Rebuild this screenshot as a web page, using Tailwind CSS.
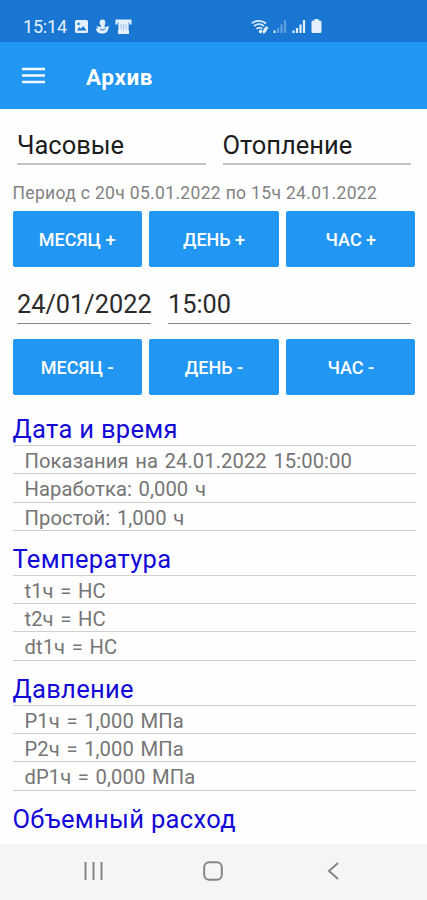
<!DOCTYPE html>
<html lang="ru">
<head>
  <meta charset="UTF-8" />
  <meta name="viewport" content="width=device-width, initial-scale=1" />
  <title>Архив</title>
  <script src="https://cdn.jsdelivr.net/npm/@tailwindcss/browser@4"></script>
</head>
<body class="bg-[#fefefe] font-['Roboto',sans-serif]">
  <div class="flex flex-col h-[900px] w-[427px] overflow-hidden">

    <!-- Строка состояния -->
    <div class="h-[42px] shrink-0 bg-[#1976d2] text-[#e3effa] flex items-start pl-[23px] pt-[17px]">
      <span class="text-[18px] leading-5 w-[45px] tracking-[-0.2px] whitespace-nowrap">15:14</span>
      <svg class="ml-[6px] mt-[2px]" width="15" height="16" viewBox="0 0 15 16">
        <path fill="currentColor" fill-rule="evenodd" d="M2.5 1h10A1.5 1.5 0 0 1 14 2.500v10A1.500 1.500 0 0 1 12.500 14h-10A1.500 1.500 0 0 1 1 12.500v-10A1.500 1.500 0 0 1 2.500 1zM3 11.500h9.500L9.300 7 7 9.800 5.300 8zM4.500 3.500a1.300 1.300 0 1 0 .1 0z" />
      </svg>
      <svg class="ml-[6px] mt-[2px]" width="15" height="16" viewBox="0 0 15 16">
        <g fill="currentColor">
          <circle cx="7.500" cy="3.500" r="2.900" />
          <path d="M5.500 5h4l.3 3.500 3.800-1.800c.2 5-2.100 7.800-6.100 7.800C3.500 14.500 1 12.500 1 9.500l2 .1L1.500 7l4.300 1z" />
        </g>
        <path d="M5 10c1.800 1.500 4 1.200 5.500-.5" fill="none" stroke="#1976d2" stroke-width="1" />
      </svg>
      <svg class="ml-[5px] mt-[1px]" width="17" height="17" viewBox="0 0 17 17">
        <path d="M.5 1.500h16v5h-3V4h-10v2.500h-3z" fill="currentColor" />
        <path d="M3 3h11v13H3z" fill="currentColor" />
        <path d="M3 4.200v8M14 4.200v8" stroke="#1976d2" stroke-width=".8" />
        <path d="M6 6v5M8.500 6v7M11 6v5" stroke="#8fbdea" stroke-width=".8" />
      </svg>
      <svg class="ml-[119px] mt-[1px]" width="19" height="17" viewBox="0 0 19 17">
        <g fill="none" stroke="currentColor" stroke-width="1.700">
          <path d="M.8 5.500C4.500 2 11 2 15 5.500" />
          <path d="M3 8.200C6 5.500 10 5.500 13 8.200" />
          <path d="M5.500 11C7.300 9.200 9.500 9.200 11.200 11" />
        </g>
        <circle cx="9.500" cy="13.500" r="1.800" fill="currentColor" />
        <path d="M13 10.500L15.500 8 18 10.500h-1.500L15 14l-2.500 2-1-2.500z" fill="currentColor" />
      </svg>
      <svg class="ml-[3px] mt-[2px]" width="14" height="15" viewBox="0 0 14 15">
        <path d="M1.500 14v-2.500" stroke="currentColor" stroke-width="2" />
        <path d="M5 14V9M8.500 14V5.500M12 14V1" stroke="#5f9fde" stroke-width="2.200" />
      </svg>
      <svg class="ml-[5px] mt-[2px]" width="14" height="15" viewBox="0 0 14 15">
        <path d="M1.500 14v-2.500M5 14V9M8.500 14V5.500M12 14V1" stroke="currentColor" stroke-width="2.200" />
      </svg>
      <svg class="ml-[5px] mt-[1px]" width="12" height="16" viewBox="0 0 12 16">
        <path d="M3.500 1h4v1.500H9A1.500 1.500 0 0 1 10.500 4v9.500A1.500 1.500 0 0 1 9 15H2A1.500 1.500 0 0 1 .5 13.500V4A1.500 1.500 0 0 1 2 2.500h1.500z" fill="currentColor" />
      </svg>
    </div>

    <!-- Заголовок -->
    <header class="h-[66.5px] shrink-0 bg-[#2196f3] text-white flex items-center pl-[22px]">
      <svg class="mt-[1px]" width="23" height="17" viewBox="0 0 23 17">
        <path d="M0 2h23M0 8.500h23M0 15h23" stroke="#f4faff" stroke-width="2.700" />
      </svg>
      <h1 class="ml-[41px] mt-[3px] text-[22.5px] leading-7 font-bold tracking-[0.6px]">Архив</h1>
    </header>

    <main class="grow min-h-0 overflow-hidden pl-[12.5px] pr-[11.5px]">
      <div class="flex gap-[17px] pl-[4.500px] pr-[4.500px] pt-[19.500px] text-[25.500px] leading-[34px] text-[#1c1c1c]">
        <div class="w-[189px] h-[37px] border-b-2 border-[#c3c3c3]">Часовые</div>
        <div class="w-[189px] h-[37px] border-b-2 border-[#c3c3c3]">Отопление</div>
      </div>

      <p class="mt-[17px] h-[28.500px] text-[17.500px] leading-[22px] tracking-[0.330px] text-[#828282] whitespace-nowrap">Период с 20ч 05.01.2022 по 15ч 24.01.2022</p>

      <div class="grid grid-cols-3 gap-[7.500px] text-white text-[18px] font-medium">
        <button class="h-[56.500px] pt-[2px] rounded-[2px] bg-[#2196f3]">МЕСЯЦ +</button>
        <button class="h-[56.500px] pt-[2px] rounded-[2px] bg-[#2196f3]">ДЕНЬ +</button>
        <button class="h-[56.500px] pt-[2px] rounded-[2px] bg-[#2196f3]">ЧАС +</button>
      </div>

      <div class="flex gap-[17px] mt-[19.500px] pl-[4.500px] pr-[4.500px] text-[25.300px] leading-[36px] text-[#2a2a2a]">
        <div class="w-[134px] h-[37px] border-b border-[#8a8a8a] whitespace-nowrap">24/01/2022</div>
        <div class="grow h-[37px] border-b border-[#8a8a8a]">15:00</div>
      </div>

      <div class="grid grid-cols-3 gap-[7.500px] mt-[15px] text-white text-[18px] font-medium">
        <button class="h-[56.500px] pt-[2px] rounded-[2px] bg-[#2196f3]">МЕСЯЦ -</button>
        <button class="h-[56.500px] pt-[2px] rounded-[2px] bg-[#2196f3]">ДЕНЬ -</button>
        <button class="h-[56.500px] pt-[2px] rounded-[2px] bg-[#2196f3]">ЧАС -</button>
      </div>

      <div id="sections" class="pt-[6px]"></div>
    </main>

    <!-- Панель навигации -->
    <nav class="h-[56px] shrink-0 bg-[#f5f5f5] flex items-center pb-[2px] text-[#858585]">
      <svg class="ml-[84px]" width="19" height="18" viewBox="0 0 19 18">
        <path d="M1.500 0v18M9.500 0v18M17.500 0v18" stroke="currentColor" stroke-width="2" />
      </svg>
      <svg class="ml-[100px]" width="20" height="20" viewBox="0 0 20 20">
        <rect x="1.200" y="1.200" width="17.600" height="17.600" rx="5" fill="none" stroke="currentColor" stroke-width="2" />
      </svg>
      <svg class="ml-[104px]" width="12" height="18" viewBox="0 0 12 18">
        <path d="M11 1L2 9l9 8" fill="none" stroke="currentColor" stroke-width="2" />
      </svg>
    </nav>
  </div>

  <script>
    // Показания прибора по разделам
    const sections = [
      {
        title: "Дата и время",
        rows: ["Показания на 24.01.2022 15:00:00", "Наработка: 0,000 ч", "Простой: 1,000 ч"],
      },
      { title: "Температура", rows: ["t1ч = НС", "t2ч = НС", "dt1ч = НС"] },
      { title: "Давление", rows: ["P1ч = 1,000 МПа", "P2ч = 1,000 МПа", "dP1ч = 0,000 МПа"] },
      { title: "Объемный расход", rows: [] },
    ];

    document.getElementById("sections").innerHTML = sections
      .map(
        (section) => `
        <section class="group">
          <h2 class="h-[45px] pt-[12px] text-[25.500px] leading-[32px] tracking-[0.330px] text-[#1208d8] border-b border-[#cfcfcf] group-last:border-transparent">${section.title}</h2>
          ${section.rows
            .map(
              (row) =>
                `<div class="h-[28.300px] pl-[12px] text-[20.200px] leading-[30px] tracking-[0.080px] [word-spacing:1.500px] text-[#757575] whitespace-nowrap border-b border-[#cfcfcf]">${row}</div>`
            )
            .join("")}
        </section>`
      )
      .join("");
  </script>
</body>
</html>
